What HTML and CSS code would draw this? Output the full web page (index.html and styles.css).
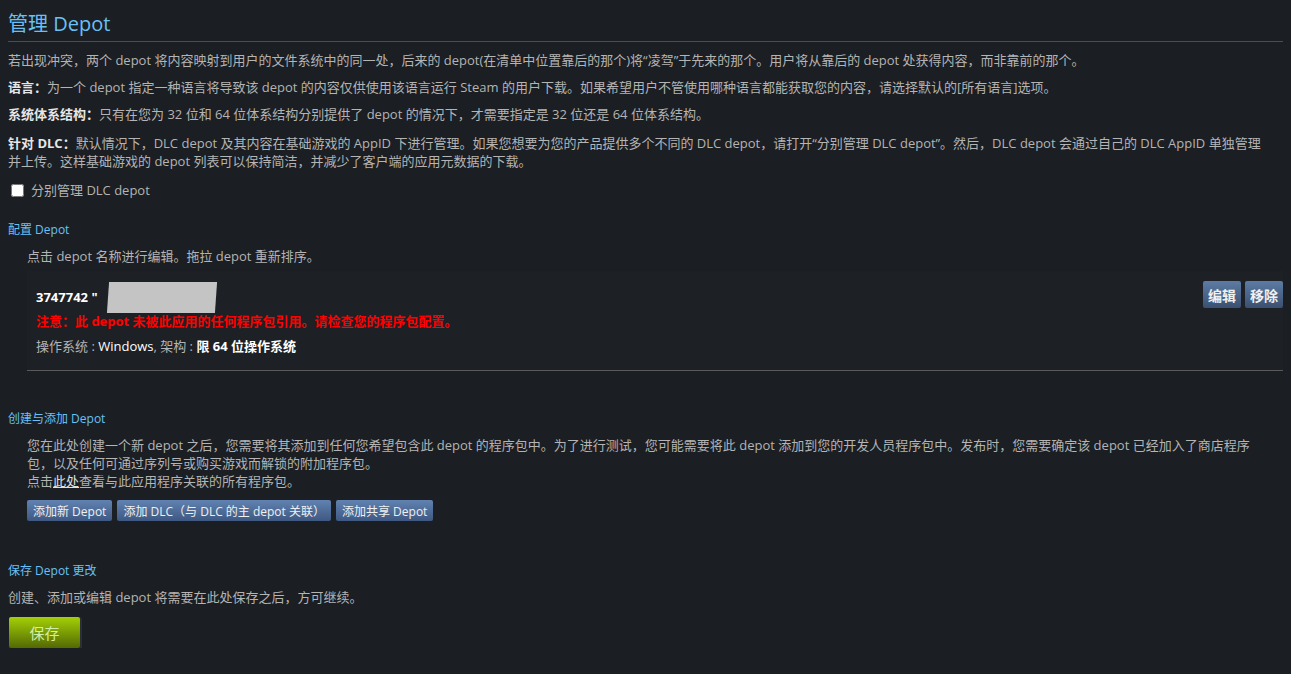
FILE: index.html
```html
<!DOCTYPE html>
<html lang="zh-CN">
<head>
  <meta charset="UTF-8" />
  <title>管理 Depot</title>
  <link rel="stylesheet" href="styles.css">
</head>
<body>
  <h1 class="page-title">管理 Depot</h1>

  <p>若出现冲突，两个 depot 将内容映射到用户的文件系统中的同一处，后来的 depot(在清单中位置靠后的那个)将“凌驾”于先来的那个。用户将从靠后的 depot 处获得内容，而非靠前的那个。</p>
  <p><b>语言：</b>为一个 depot 指定一种语言将导致该 depot 的内容仅供使用该语言运行 Steam 的用户下载。如果希望用户不管使用哪种语言都能获取您的内容，请选择默认的[所有语言]选项。</p>
  <p><b>系统体系结构：</b>只有在您为 32 位和 64 位体系结构分别提供了 depot 的情况下，才需要指定是 32 位还是 64 位体系结构。</p>
  <p class="last"><b class="label">针对 DLC：</b>默认情况下，DLC depot 及其内容在基础游戏的 AppID 下进行管理。如果您想要为您的产品提供多个不同的 DLC depot，请打开“分别管理 DLC depot”。然后，DLC depot 会通过自己的 DLC AppID 单独管理并上传。这样基础游戏的 depot 列表可以保持简洁，并减少了客户端的应用元数据的下载。</p>

  <label class="check-row"><input type="checkbox" class="check"> 分别管理 DLC depot</label>

  <h2 class="section-title first">配置 Depot</h2>
  <div class="indent">
    <p class="hint">点击 depot 名称进行编辑。拖拉 depot 重新排序。</p>

    <div class="depot-box">
      <div class="depot-info">
        <div class="depot-name">3747742 "<span class="redacted"></span></div>
        <div class="depot-warning">注意：此 depot 未被此应用的任何程序包引用。请检查您的程序包配置。</div>
        <div class="depot-meta">操作系统 : <span class="val">Windows</span>, 架构 : <b class="val">限 64 位操作系统</b></div>
      </div>
      <div class="depot-actions">
        <button class="btn-blue big">编辑</button>
        <button class="btn-blue big">移除</button>
      </div>
    </div>
  </div>

  <h2 class="section-title">创建与添加 Depot</h2>
  <div class="indent">
    <p class="tight">您在此处创建一个新 depot 之后，您需要将其添加到任何您希望包含此 depot 的程序包中。为了进行测试，您可能需要将此 depot 添加到您的开发人员程序包中。发布时，您需要确定该 depot 已经加入了商店程序包，以及任何可通过序列号或购买游戏而解锁的附加程序包。<br>点击<a href="#" class="link">此处</a>查看与此应用程序关联的所有程序包。</p>
    <div class="btn-row">
      <button class="btn-blue">添加新 Depot</button>
      <button class="btn-blue">添加 DLC（与 DLC 的主 depot 关联）</button>
      <button class="btn-blue">添加共享 Depot</button>
    </div>
  </div>

  <h2 class="section-title save">保存 Depot 更改</h2>
  <p class="save-note">创建、添加或编辑 depot 将需要在此处保存之后，方可继续。</p>
  <button class="btn-green">保存</button>
</body>
</html>
```

FILE: styles.css
```css
body {
  margin: 8px;
  background: #1b1e23;
  color: #b4b4b4;
  font-family: 'Open Sans', 'Noto Sans CJK SC', sans-serif;
  font-size: 13px;
  line-height: 18px;
}

b {
  color: #e6e6e6;
  font-weight: bold;
}

p {
  margin: 0 22px 9px 0;
}

p.last {
  margin-top: 11px;
  margin-bottom: 11px;
}

.label {
  display: inline-block;
}

.page-title {
  margin: 3px -4px 9px 0;
  padding-bottom: 4px;
  font-size: 20px;
  line-height: 26px;
  font-weight: normal;
  color: #67c1f5;
  border-bottom: 1px solid #4a4d52;
}

.check-row {
  display: flex;
  align-items: center;
  gap: 7px;
  margin-left: 3px;
}

.check {
  margin: 0;
  width: 13px;
  height: 13px;
}

.section-title {
  margin: 39px 0 8px 0;
  font-size: 12px;
  line-height: 18px;
  font-weight: normal;
  color: #67c1f5;
}

.section-title.first {
  margin-top: 22px;
}

.section-title.save {
  margin-top: 41px;
}

.indent {
  padding-left: 19px;
}

.hint {
  margin-bottom: 6px;
}

.depot-box {
  display: flex;
  justify-content: space-between;
  align-items: flex-start;
  padding: 17px 2px 15px 9px;
  margin-right: -3px;
  background: #1d2025;
  border-right: 1px solid #5a5a5a;
  border-bottom: 1px solid #5a5a5a;
}

.depot-name {
  color: #ffffff;
  font-weight: bold;
  height: 24px;
  display: flex;
  align-items: flex-start;
}

.redacted {
  display: inline-block;
  width: 108px;
  height: 31px;
  margin: -6px 0 0 10px;
  background: #c4c4c4;
  transform: skewX(-4deg);
}

.depot-warning {
  color: #ff0000;
  font-weight: bold;
  margin-bottom: 7px;
}

.depot-meta .val {
  color: #ffffff;
}

.depot-actions {
  display: flex;
  gap: 4px;
  margin-top: -7px;
}

.btn-blue {
  border: none;
  border-radius: 2px;
  padding: 0 6px;
  height: 21px;
  background: linear-gradient(to bottom, #6182b1, #3e5882);
  color: #f0f0f0;
  font-family: 'Open Sans', 'Noto Sans CJK SC', sans-serif;
  font-size: 12px;
  cursor: pointer;
}

.btn-blue.big {
  height: 27px;
  padding: 0 5px;
  font-size: 14px;
  font-weight: bold;
  background: linear-gradient(to bottom, #5c7ba4, #3b5070);
}

.tight {
  margin-bottom: 10px;
}

.link {
  color: #e0e0e0;
  text-decoration: underline;
}

.btn-row {
  display: flex;
  gap: 5px;
}

.save-note {
  margin-bottom: 9px;
}

.btn-green {
  margin: 2px 0 0 1px;
  width: 71px;
  height: 31px;
  border: none;
  border-radius: 2px;
  background: linear-gradient(to bottom, #a4d007, #536904);
  box-shadow: 1px 1px 0 1px #2a2e36;
  color: #d2efa9;
  font-family: 'Open Sans', 'Noto Sans CJK SC', sans-serif;
  font-size: 15px;
  cursor: pointer;
}
```
